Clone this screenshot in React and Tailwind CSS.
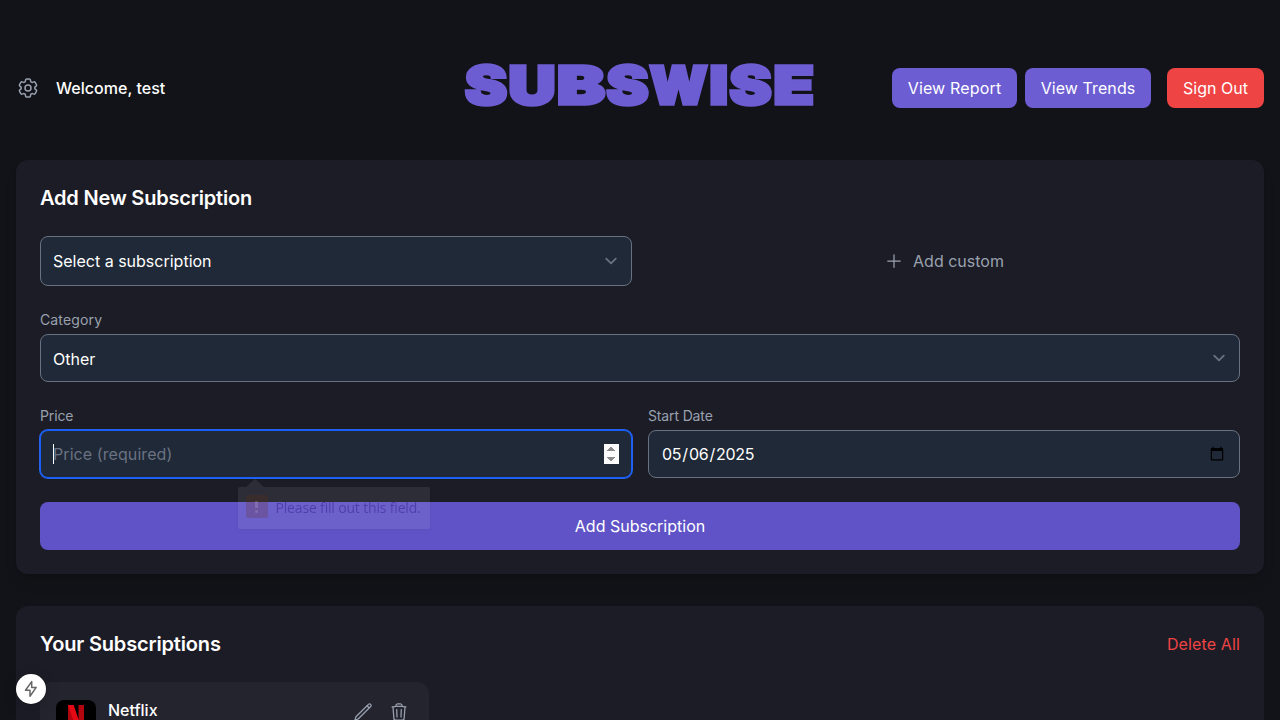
import { HiOutlineCog6Tooth, HiOutlinePlus, HiOutlinePencil, HiOutlineTrash } from "react-icons/hi2";

const LOGO = [
  ["S", 464, 42],
  ["U", 507.5, 47],
  ["B", 556, 48],
  ["S", 605.5, 42],
  ["W", 648.5, 58],
  ["I", 708.5, 18.5],
  ["S", 728.5, 42],
  ["E", 772.5, 40.5],
];

function Logo() {
  return (
    <svg width="352" height="56" viewBox="463 57 352 56" className="overflow-visible">
      <text
        y="104"
        fontSize="52"
        fontWeight="900"
        fill="#6c5dd3"
        stroke="#6c5dd3"
        strokeWidth="3.4"
        fontFamily="Inter, sans-serif"
      >
        {LOGO.map(([c, x, w], i) => (
          <tspan key={i} x={x} textLength={w} lengthAdjust="spacingAndGlyphs">
            {c}
          </tspan>
        ))}
      </text>
    </svg>
  );
}

function Chevron() {
  return (
    <svg width="24" height="24" viewBox="0 0 20 20" fill="none" stroke="#6b7280" strokeWidth="1.5" strokeLinecap="round" strokeLinejoin="round">
      <path d="m6 8 4 4 4-4" />
    </svg>
  );
}

function Tooltip() {
  return (
    <div className="pointer-events-none w-[192px] font-['Open_Sans',sans-serif]">
      <svg width="20" height="8" className="ml-[7px] block" viewBox="0 0 20 8">
        <path d="M1 8 10 0l9 8z" fill="#fff" fillOpacity="0.08" />
      </svg>
      <div className="flex h-[42px] items-start gap-[8px] rounded-[2px] bg-white/8 pt-2 pl-2 shadow-[0_2px_5px_rgba(0,0,0,0.04)]">
        <span className="flex h-[23px] w-[22px] shrink-0 flex-col items-center justify-center gap-[2px] rounded-[2px] bg-[#6b2800]/20">
          <span className="h-[7px] w-[3px] bg-white/15" />
          <span className="h-[3px] w-[3px] rounded-full bg-white/15" />
        </span>
        <span className="mt-[3px] text-[14px] leading-5 tracking-[-0.012em] whitespace-nowrap text-[#170070]/35">Please fill out this field.</span>
      </div>
    </div>
  );
}

export default function App() {
  return (
    <div className="h-[720px] overflow-hidden bg-[#121318] px-4 font-[Inter,sans-serif] text-base text-white">
      <header className="grid h-40 grid-cols-[1fr_352px_1fr] items-center pt-4">
        <div className="flex items-center gap-4">
          <HiOutlineCog6Tooth size={24} className="text-gray-400" />
          <span className="font-medium tracking-[0.002em]">Welcome, test</span>
        </div>
        <h1 className="flex -translate-y-[3px] justify-center">
          <Logo />
        </h1>
        <div className="flex justify-end">
          <button className="mr-2 h-10 w-[125px] rounded-lg bg-[#6c5dd3] tracking-[0.01em]">View Report</button>
          <button className="mr-4 h-10 w-[126px] rounded-lg bg-[#6c5dd3] tracking-[0.005em]">View Trends</button>
          <button className="h-10 w-[97px] rounded-lg bg-[#ef4444]">Sign Out</button>
        </div>
      </header>

      <section className="h-[414px] rounded-xl bg-[#1c1c26] px-6 pt-6 shadow-lg">
        <h2 className="text-xl leading-7 font-semibold tracking-[-0.009em]">Add New Subscription</h2>
        <div className="mt-6 grid grid-cols-2 gap-4">
          <div className="flex h-[50px] items-center justify-between rounded-lg border border-gray-500 bg-[#1f2937] pr-2 pl-3">
            Select a subscription
            <Chevron />
          </div>
          <button className="flex items-center justify-center gap-2 text-gray-400">
            <HiOutlinePlus size={20} />
            <span className="pl-px">Add custom</span>
          </button>
        </div>
        <label className="mt-6 mb-1 block text-sm tracking-[0.01em] text-gray-400">Category</label>
        <div className="flex h-12 items-center justify-between rounded-lg border border-gray-500 bg-[#1f2937] pr-2 pl-3">
          <span className="pt-[2px]">Other</span>
          <Chevron />
        </div>
        <div className="mt-6 grid grid-cols-2 gap-4">
          <div>
            <label className="mb-1 block text-sm tracking-[-0.01em] text-gray-400">Price</label>
            <div className="relative">
              <input
                type="number"
                autoFocus
                placeholder="Price (required)"
                className="block h-12 w-full rounded-lg border border-blue-600 bg-[#1f2937] px-3 tracking-[0.005em] caret-transparent ring-1 ring-[#2563eb] outline-none placeholder:text-gray-500"
              />
              <span className="absolute top-[14px] left-[13px] h-5 w-px bg-white" />
            </div>
          </div>
          <div>
            <label className="mb-1 block text-sm tracking-[-0.01em] text-gray-400">Start Date</label>
            <input
              type="date"
              defaultValue="2025-05-06"
              className="block h-12 w-full rounded-lg border border-gray-500 bg-[#1f2937] px-3 tracking-[-0.015em]"
            />
          </div>
        </div>
        <div className="relative mt-6">
          <button className="h-12 w-full rounded-lg bg-[#6053c7]">Add Subscription</button>
          <div className="absolute -top-[23px] left-[197.5px] z-10">
            <Tooltip />
          </div>
        </div>
      </section>

      <section className="mt-8 h-[200px] rounded-xl bg-[#1c1c26] px-6 pt-6">
        <div className="flex justify-between leading-7">
          <h2 className="text-xl leading-7 font-semibold tracking-[-0.008em]">Your Subscriptions</h2>
          <button className="tracking-[0.008em] text-[#ef4444]">Delete All</button>
        </div>
        <div className="mt-6 flex h-[120px] w-[389px] items-start rounded-xl bg-[#24242e] px-4 pt-4">
          <svg width="40" height="40" viewBox="0 0 40 40" className="mt-[2px] shrink-0">
            <rect width="40" height="40" rx="8" fill="#000" />
            <path d="M12 5h5.5v30H12zM22.5 5H28v30h-5.5z" fill="#b1060f" />
            <path d="M12 5h5.6L28 35h-5.5z" fill="#e50914" />
          </svg>
          <span className="ml-3 font-medium">Netflix</span>
          <div className="mt-1 mr-1 ml-auto flex gap-4 text-gray-400">
            <HiOutlinePencil size={20} />
            <HiOutlineTrash size={20} />
          </div>
        </div>
      </section>

      <div className="fixed top-[674px] left-4 flex h-[30px] w-[30px] items-center justify-center rounded-full bg-white shadow-[0_0_0_1px_rgba(0,0,0,0.15),0_4px_16px_rgba(0,0,0,0.15)]">
        <svg width="16" height="18" viewBox="0 0 16 18" fill="none" stroke="#666" strokeWidth="1.5" strokeLinejoin="round">
          <path d="M8.7 1.6 2.5 10.3H7v5.9l6.2-8.8H8.7z" />
        </svg>
      </div>
    </div>
  );
}
